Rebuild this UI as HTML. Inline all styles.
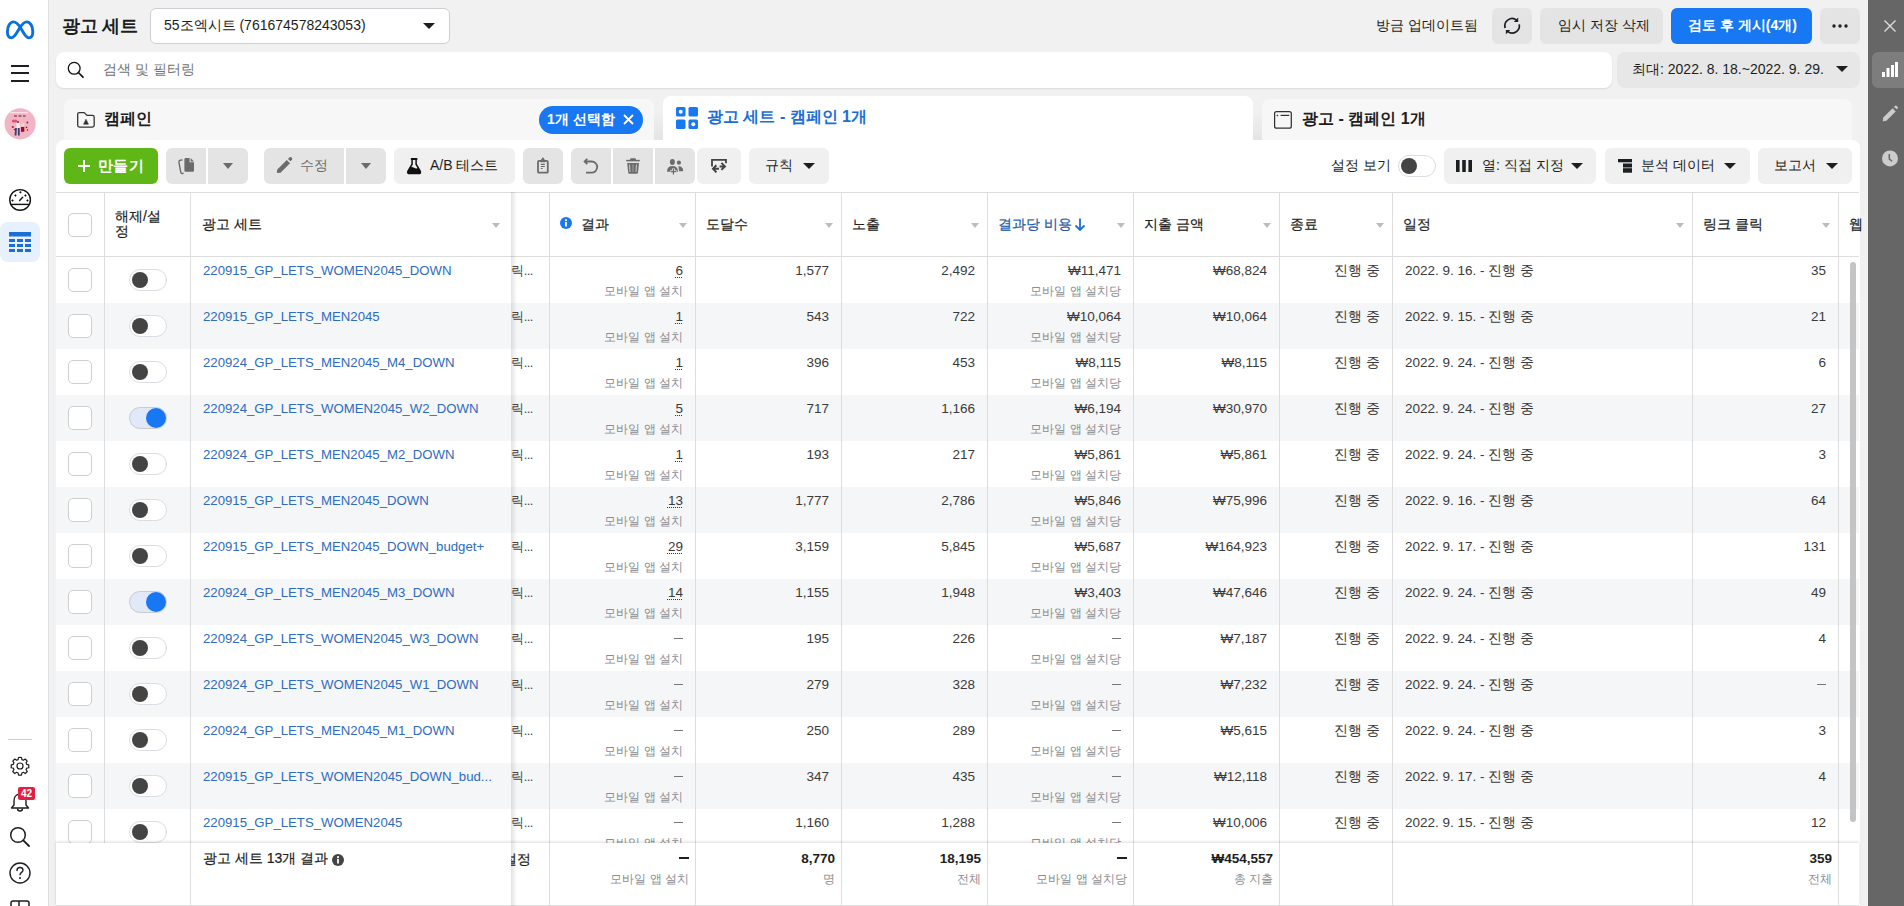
<!DOCTYPE html><html><head><meta charset="utf-8"><style>
*{box-sizing:border-box;margin:0;padding:0}
html,body{width:1904px;height:906px;overflow:hidden;background:#f1f1f1}
body{position:relative;font-family:"Liberation Sans",sans-serif;color:#1c1e21;font-size:14px}
.a{position:absolute}
.t{position:absolute;white-space:nowrap;line-height:1}
.r{text-align:right}
.btn{position:absolute;background:#ebebeb;border-radius:6px}
svg{position:absolute;display:block;overflow:visible}
.num{font-size:13.5px;color:#3a3a3a}
.dash{display:inline-block;width:9px;height:1.5px;background:#777;vertical-align:4px}
.dashb{display:inline-block;width:10px;height:2px;background:#1c1e21;vertical-align:4px}
.ul{text-decoration:underline dotted #333;text-decoration-thickness:1.3px;text-underline-offset:1.5px}
.sub{font-size:12px;color:#8a8d91}
.hd{font-size:14px;color:#1c1e21;-webkit-text-stroke:0.2px #1c1e21}
.cb{position:absolute;width:24px;height:24px;border:1px solid #cfcfcf;border-radius:5px;background:#fff}
.tg{position:absolute;width:38px;height:22px;border-radius:11px;border:1px solid #dadde1;background:#fff}
.tg i{position:absolute;left:2px;top:2px;width:16px;height:16px;border-radius:50%;background:#444}
.tg.on{background:#e1e8f7;border-color:#c9ccd1}
.tg.on i{left:16px;top:-0.5px;width:20px;height:20px;background:#1877f2}
.dd{position:absolute;width:0;height:0;border-left:6px solid transparent;border-right:6px solid transparent;border-top:6px solid #1c1e21}
.ddg{position:absolute;width:0;height:0;border-left:6px solid transparent;border-right:6px solid transparent;border-top:6px solid #bdbdbd}
</style></head><body>
<div class="a" style="left:0;top:0;width:49px;height:906px;background:#fff;border-right:1px solid #dddfe2"></div>
<div class="a" style="left:1868px;top:0;width:36px;height:906px;background:#666"></div>
<svg style="left:0px;top:0px" width="48" height="48" viewBox="0 0 48 48"><path d="M19.6 28 C17 32.2 14.8 37.9 11.2 37.9 C8.6 37.9 7.4 35.2 7.4 31.6 C7.4 26.3 10 21.9 13.5 21.9 C16.4 21.9 18.4 24.6 20.4 27.5 C23 31.6 25.6 37.9 29 37.9 C31.5 37.9 32.8 35.4 32.8 31.6 C32.8 26 30.1 21.9 26.6 21.9 C23.6 21.9 21.6 25 19.6 28 Z" fill="none" stroke="#0a6fe0" stroke-width="2.9" stroke-linejoin="round"/></svg>
<div class="a" style="left:11px;top:65px;width:18px;height:2px;background:#1c1e21"></div>
<div class="a" style="left:11px;top:72px;width:18px;height:2px;background:#1c1e21"></div>
<div class="a" style="left:11px;top:80px;width:18px;height:2px;background:#1c1e21"></div>
<svg style="left:0px;top:104px" width="40" height="40" viewBox="0 0 40 40"><circle cx="20.1" cy="19.8" r="15.6" fill="#f2b5c5"/><rect x="10" y="8" width="18" height="1.2" fill="#fff" opacity=".6"/><path d="M14 12 h3 M18.5 12 h3 M23 12 h2.5" stroke="#8a2c3a" stroke-width="1.3" opacity=".8"/><circle cx="13.5" cy="17" r="1.6" fill="#e0506a"/><circle cx="15.6" cy="17" r="1.6" fill="#e0506a"/><rect x="16.5" y="19" width="3.2" height="5" fill="#fbeef0"/><path d="M16 24 L15.5 31.5 M18.8 24 L18.8 31.5" stroke="#3c3f73" stroke-width="1.8"/><circle cx="22.8" cy="20.8" r="1.7" fill="#f1d9b0"/><rect x="21" y="23" width="3.3" height="4.8" fill="#9b0f1c"/><circle cx="27.4" cy="18.5" r=".9" fill="#8a2030"/><circle cx="12.8" cy="23" r="1" fill="#8a2030"/><circle cx="26.5" cy="23.4" r=".8" fill="#8a2030"/><circle cx="27.5" cy="26" r=".8" fill="#8a2030"/><circle cx="14.4" cy="25.5" r=".7" fill="#8a2030"/><circle cx="18" cy="18" r=".9" fill="#8a2030"/></svg>
<svg style="left:9px;top:189px" width="22" height="22" viewBox="0 0 22 22"><circle cx="11.1" cy="10.9" r="10.3" fill="none" stroke="#111" stroke-width="1.4"/><line x1="1.2" y1="15.4" x2="21" y2="15.4" stroke="#111" stroke-width="1.4"/><line x1="10.6" y1="11.5" x2="13.7" y2="8.3" stroke="#111" stroke-width="1.4" stroke-linecap="round"/><rect x="10.5" y="2.4" width="1.8" height="1.8" transform="rotate(45 11.4 3.3)" fill="#111"/><rect x="5.5" y="5.5" width="1.8" height="1.8" transform="rotate(45 6.4 6.4)" fill="#111"/><rect x="15.499999999999998" y="5.5" width="1.8" height="1.8" transform="rotate(45 16.4 6.4)" fill="#111"/><rect x="2.6" y="10.5" width="1.8" height="1.8" transform="rotate(45 3.5 11.4)" fill="#111"/><rect x="17.6" y="10.5" width="1.8" height="1.8" transform="rotate(45 18.5 11.4)" fill="#111"/></svg>
<div class="a" style="left:0;top:222px;width:40px;height:40px;border-radius:8px;background:#e7f0fd"></div>
<svg style="left:9px;top:232px" width="22" height="20" viewBox="0 0 22 20"><rect x="0" y="0" width="22" height="4.5" fill="#1a6ed8"/><rect x="0" y="7" width="6" height="3" fill="#1a6ed8"/><rect x="8" y="7" width="6" height="3" fill="#1a6ed8"/><rect x="16" y="7" width="6" height="3" fill="#1a6ed8"/><rect x="0" y="12" width="6" height="3" fill="#1a6ed8"/><rect x="8" y="12" width="6" height="3" fill="#1a6ed8"/><rect x="16" y="12" width="6" height="3" fill="#1a6ed8"/><rect x="0" y="17" width="6" height="3" fill="#1a6ed8"/><rect x="8" y="17" width="6" height="3" fill="#1a6ed8"/><rect x="16" y="17" width="6" height="3" fill="#1a6ed8"/></svg>
<div class="a" style="left:8px;top:739px;width:24px;height:1px;background:#ccd0d5"></div>
<svg style="left:9px;top:755px" width="22" height="22" viewBox="0 0 24 24"><path d="M12 2.5l1.6 .2.5 2.3 1.6.7 2-1.3 2.2 2.2-1.3 2 .7 1.6 2.3.5v3.2l-2.3.5-.7 1.6 1.3 2-2.2 2.2-2-1.3-1.6.7-.5 2.3h-3.2l-.5-2.3-1.6-.7-2 1.3-2.2-2.2 1.3-2-.7-1.6-2.3-.5v-3.2l2.3-.5.7-1.6-1.3-2 2.2-2.2 2 1.3 1.6-.7.5-2.3z" fill="none" stroke="#1c1e21" stroke-width="1.3" stroke-linejoin="round"/><circle cx="12" cy="12" r="3.3" fill="none" stroke="#1c1e21" stroke-width="1.3"/></svg>
<svg style="left:9px;top:790px" width="22" height="24" viewBox="0 0 22 24"><path d="M11 4 C6.5 4 5 8 5 11 V15 L2.5 18 H19.5 L17 15 V11 C17 8 15.5 4 11 4 Z" fill="none" stroke="#1c1e21" stroke-width="1.4" stroke-linejoin="round"/><path d="M8.5 18.5 a2.5 2.5 0 0 0 5 0" fill="none" stroke="#1c1e21" stroke-width="1.4"/></svg>
<div class="a" style="left:18px;top:787px;width:17px;height:13px;border-radius:2px;background:#e41e3f;color:#fff;font-size:10px;font-weight:bold;line-height:13px;text-align:center">42</div>
<svg style="left:9px;top:826px" width="22" height="22" viewBox="0 0 22 22"><circle cx="9" cy="9" r="7.3" fill="none" stroke="#1c1e21" stroke-width="1.5"/><line x1="14.3" y1="14.3" x2="20" y2="20" stroke="#1c1e21" stroke-width="1.8" stroke-linecap="round"/></svg>
<svg style="left:9px;top:862px" width="22" height="22" viewBox="0 0 22 22"><circle cx="11" cy="11" r="10" fill="none" stroke="#1c1e21" stroke-width="1.4"/><path d="M8 8.5 C8 6.5 9.5 5.5 11 5.5 C12.8 5.5 14 6.7 14 8.2 C14 10.3 11 10.5 11 12.8" fill="none" stroke="#1c1e21" stroke-width="1.4" stroke-linecap="round"/><circle cx="11" cy="16" r="1" fill="#1c1e21"/></svg>
<svg style="left:10px;top:900px" width="20" height="10" viewBox="0 0 20 10"><rect x="1" y="1" width="18" height="14" rx="2" fill="none" stroke="#1c1e21" stroke-width="1.5"/><line x1="9" y1="1" x2="9" y2="10" stroke="#1c1e21" stroke-width="1.5"/></svg>
<div class="t " style="left:62px;top:17px;font-size:18px;font-weight:bold;color:#1c1e21;letter-spacing:-0.2px">광고 세트</div>
<div class="a" style="left:150px;top:8px;width:300px;height:36px;background:#fff;border:1px solid #ccd0d5;border-radius:6px"></div>
<div class="t " style="left:164px;top:18px;font-size:14px;color:#1c1e21">55조엑시트 (761674578243053)</div>
<div class="dd" style="left:423px;top:23px"></div>
<div class="t " style="left:1376px;top:18px;font-size:14px;color:#1c1e21">방금 업데이트됨</div>
<div class="btn" style="left:1492px;top:8px;width:40px;height:36px;background:#e4e4e4"></div>
<svg style="left:1500px;top:14px" width="24" height="24" viewBox="1500 14 24 24"><path d="M1505.2 27.9 A7.2 7.2 0 0 1 1516.6 20.2" fill="none" stroke="#1c1e21" stroke-width="1.7"/><path d="M1519.2 24.4 A7.2 7.2 0 0 1 1507.6 31.4" fill="none" stroke="#1c1e21" stroke-width="1.7"/><path d="M1518.2 17.6 V22 H1513.8 Z" fill="#1c1e21"/><path d="M1505.9 34.2 V29.9 H1510.3 Z" fill="#1c1e21"/></svg>
<div class="btn" style="left:1540px;top:8px;width:123px;height:36px;background:#e4e4e4"></div>
<div class="t " style="left:1558px;top:18px;font-size:14px;color:#1c1e21">임시 저장 삭제</div>
<div class="btn" style="left:1671px;top:8px;width:141px;height:36px;background:#1877f2"></div>
<div class="t " style="left:1688px;top:18px;font-size:14px;color:#fff;font-weight:bold">검토 후 게시(4개)</div>
<div class="btn" style="left:1820px;top:8px;width:40px;height:36px;background:#e4e4e4"></div>
<svg style="left:1831px;top:24px" width="18" height="4" viewBox="0 0 18 4"><circle cx="3" cy="2" r="1.7" fill="#1c1e21"/><circle cx="9" cy="2" r="1.7" fill="#1c1e21"/><circle cx="15" cy="2" r="1.7" fill="#1c1e21"/></svg>
<div class="a" style="left:56px;top:52px;width:1556px;height:36px;background:#fff;border-radius:8px;box-shadow:0 1px 2px rgba(0,0,0,.10)"></div>
<svg style="left:64px;top:58px" width="24" height="24" viewBox="64 58 24 24"><circle cx="74.2" cy="68.3" r="5.9" fill="none" stroke="#111" stroke-width="1.3"/><line x1="78.4" y1="72.5" x2="83" y2="77.1" stroke="#111" stroke-width="1.7" stroke-linecap="round"/></svg>
<div class="t " style="left:103px;top:62px;font-size:14px;color:#737373">검색 및 필터링</div>
<div class="btn" style="left:1617px;top:52px;width:243px;height:36px;background:#e7e7e7;border-radius:8px"></div>
<div class="t " style="left:1632px;top:62px;font-size:14px;color:#1c1e21">최대: 2022. 8. 18.~2022. 9. 29.</div>
<div class="dd" style="left:1836px;top:66px"></div>
<div class="a" style="left:64px;top:99px;width:590px;height:45px;background:#f7f7f7;border-radius:8px 8px 0 0"></div>
<svg style="left:74px;top:108px" width="24" height="24" viewBox="74 108 24 24"><path d="M79.2 112.6 H83.8 Q84.6 112.6 85.1 113.3 L86.2 114.6 Q86.7 115.3 87.5 115.3 H92.4 Q94.2 115.3 94.2 117.1 V125.3 Q94.2 127.1 92.4 127.1 H79.5 Q77.7 127.1 77.7 125.3 V114.1 Q77.7 112.6 79.2 112.6 Z" fill="none" stroke="#333" stroke-width="1.3"/><path d="M83.6 124.2 L86 119.2 L88.4 124.2 Z" fill="#333" stroke="#333" stroke-width=".6" stroke-linejoin="round"/></svg>
<div class="t " style="left:104px;top:111px;font-size:16px;font-weight:bold;color:#1c1e21">캠페인</div>
<div class="a" style="left:539px;top:106px;width:104px;height:28px;border-radius:14px;background:#1877f2"></div>
<div class="t " style="left:547px;top:112px;font-size:14px;color:#fff;font-weight:bold">1개 선택함</div>
<svg style="left:623px;top:114px" width="11" height="11" viewBox="0 0 11 11"><path d="M1 1 L10 10 M10 1 L1 10" stroke="#fff" stroke-width="1.8"/></svg>
<div class="a" style="left:654px;top:110px;width:9px;height:34px;background:linear-gradient(180deg,rgba(0,0,0,0),rgba(0,0,0,.06))"></div>
<div class="a" style="left:1253px;top:110px;width:9px;height:34px;background:linear-gradient(180deg,rgba(0,0,0,0),rgba(0,0,0,.06))"></div>
<div class="a" style="left:663px;top:96px;width:590px;height:48px;background:#fff;border-radius:8px 8px 0 0"></div>
<svg style="left:676px;top:107px" width="22" height="22" viewBox="0 0 22 22"><rect x="0" y="0" width="9.5" height="9.5" rx="1.5" fill="#1877f2"/><rect x="12.5" y="0" width="9.5" height="9.5" rx="1.5" fill="#1877f2"/><rect x="0" y="12.5" width="9.5" height="9.5" rx="1.5" fill="#1877f2"/><rect x="12.5" y="12.5" width="9.5" height="9.5" rx="1.5" fill="#1877f2"/><circle cx="4.7" cy="4.7" r="2" fill="#fff"/><circle cx="17.3" cy="17.3" r="2" fill="#fff"/></svg>
<div class="t " style="left:707px;top:109px;font-size:16px;font-weight:bold;color:#1a6ed8">광고 세트 - 캠페인 1개</div>
<div class="a" style="left:1262px;top:99px;width:590px;height:45px;background:#f7f7f7;border-radius:8px 8px 0 0"></div>
<svg style="left:1270px;top:108px" width="26" height="24" viewBox="1270 108 26 24"><rect x="1274.6" y="111.6" width="16.7" height="16.6" rx="2" fill="none" stroke="#333" stroke-width="1.25"/><path d="M1280.6 115.4 H1289.2" stroke="#333" stroke-width="1.2"/><rect x="1276.7" y="114.7" width="1.4" height="1.4" transform="rotate(45 1277.4 115.4)" fill="#333"/></svg>
<div class="t " style="left:1302px;top:111px;font-size:16px;font-weight:bold;color:#1c1e21">광고 - 캠페인 1개</div>
<div class="a" style="left:56px;top:140px;width:1804px;height:766px;background:#fff;border-radius:8px 8px 0 0"></div>
<div class="btn" style="left:64px;top:148px;width:94px;height:36px;background:#5fb617"></div>
<svg style="left:77px;top:159px" width="14" height="14" viewBox="0 0 14 14"><path d="M7 1 V13 M1 7 H13" stroke="#fff" stroke-width="2"/></svg>
<div class="t " style="left:98px;top:158px;font-size:15px;color:#fff;font-weight:bold;letter-spacing:0.3px">만들기</div>
<div class="btn" style="left:166px;top:148px;width:40px;height:36px;background:#e4e4e4;border-radius:6px 0 0 6px"></div>
<div class="btn" style="left:208px;top:148px;width:40px;height:36px;background:#e4e4e4;border-radius:0 6px 6px 0"></div>
<svg style="left:174px;top:154px" width="24" height="24" viewBox="174 154 24 24"><path d="M185.6 158 H189.6 V162.2 H194 V170.6 Q194 171.8 192.8 171.8 H185.6 Q184.4 171.8 184.4 170.6 V159.2 Q184.4 158 185.6 158 Z" fill="#6b6b6b"/><path d="M190.6 158 L194 161.4 H190.6 Z" fill="#6b6b6b"/><path d="M182.5 159.9 L180.2 160.3 Q178.6 160.6 178.9 162.2 L180.8 172.4 Q181.1 173.8 182.6 173.5 L183.6 173.3" fill="none" stroke="#6b6b6b" stroke-width="1.4"/></svg>
<div class="a" style="left:223px;top:163px;width:0;height:0;border-left:5px solid transparent;border-right:5px solid transparent;border-top:6px solid #6b6b6b"></div>
<div class="btn" style="left:264px;top:148px;width:80px;height:36px;background:#e4e4e4;border-radius:6px 0 0 6px"></div>
<div class="btn" style="left:346px;top:148px;width:40px;height:36px;background:#e4e4e4;border-radius:0 6px 6px 0"></div>
<svg style="left:274px;top:154px" width="22" height="22" viewBox="274 154 22 22"><path d="M277.3 169.6 L286.8 160.1 L290 163.3 L280.5 172.8 L277.8 173 Q276.8 173 276.9 172 Z" fill="#6b6b6b"/><path d="M288 158.9 L289.6 157.3 Q290.4 156.6 291.2 157.3 L292 158.1 Q292.7 158.9 292 159.7 L290.4 161.3 Z" fill="#6b6b6b"/></svg>
<div class="t " style="left:300px;top:158px;font-size:14px;color:#6b6b6b">수정</div>
<div class="a" style="left:361px;top:163px;width:0;height:0;border-left:5px solid transparent;border-right:5px solid transparent;border-top:6px solid #6b6b6b"></div>
<div class="btn" style="left:394px;top:148px;width:121px;height:36px;background:#f0f0f0"></div>
<svg style="left:404px;top:154px" width="20" height="22" viewBox="404 154 20 22"><rect x="410.8" y="157.9" width="6.6" height="2" rx=".4" fill="#111"/><path d="M412.1 159.5 V164.2 L408 171 Q406.9 173.6 409.8 173.6 H418.4 Q421.3 173.6 420.2 171 L416.1 164.2 V159.5" fill="none" stroke="#111" stroke-width="1.5"/><path d="M409.8 167.6 Q412 166.3 414.1 167.8 Q416.3 169.3 418.4 167.6 L420.2 171 Q421.3 173.6 418.4 173.6 H409.8 Q406.9 173.6 408 171 Z" fill="#111"/></svg>
<div class="t " style="left:430px;top:158px;font-size:14px;color:#1c1e21">A/B 테스트</div>
<div class="btn" style="left:523px;top:148px;width:40px;height:36px;background:#e4e4e4"></div>
<svg style="left:533px;top:154px" width="20" height="22" viewBox="533 154 20 22"><rect x="538" y="160.9" width="9.8" height="11.8" rx="1" fill="none" stroke="#6b6b6b" stroke-width="1.8"/><path d="M540.6 161.6 L542.9 158 L545.2 161.6 Z" fill="#6b6b6b" stroke="#6b6b6b" stroke-width="1.2" stroke-linejoin="round"/><path d="M540.8 164.4 H544.8 M540.8 166.5 H544.8 M540.8 168.5 H542.6" stroke="#6b6b6b" stroke-width="1.1"/></svg>
<div class="btn" style="left:571px;top:148px;width:40px;height:36px;background:#e4e4e4;border-radius:6px 0 0 6px"></div>
<div class="btn" style="left:613px;top:148px;width:40px;height:36px;background:#e4e4e4;border-radius:0"></div>
<div class="btn" style="left:655px;top:148px;width:40px;height:36px;background:#e4e4e4;border-radius:0 6px 6px 0"></div>
<svg style="left:580px;top:154px" width="22" height="22" viewBox="580 154 22 22"><path d="M587.3 158.8 L584.6 161.5 L587.3 164.2" fill="none" stroke="#6b6b6b" stroke-width="1.8" stroke-linejoin="miter"/><path d="M585 161.5 H591.6 A5.6 5.6 0 0 1 591.6 172.7 H586" fill="none" stroke="#6b6b6b" stroke-width="1.8"/></svg>
<svg style="left:622px;top:154px" width="22" height="22" viewBox="622 154 22 22"><path d="M626.2 160.6 H639.8" stroke="#6b6b6b" stroke-width="1.5"/><path d="M629.6 160.4 L630.6 158.2 H635.4 L636.4 160.4 Z" fill="#6b6b6b"/><path d="M627.2 163 H639 L638 172.6 Q637.9 173.8 636.7 173.8 H629.5 Q628.3 173.8 628.2 172.6 Z" fill="#6b6b6b"/><path d="M629.5 164.5 L630 172 M636.5 164.5 L636 172" stroke="#d8d8d8" stroke-width=".9"/><path d="M633 164.5 V172" stroke="#9a9a9a" stroke-width="1.2"/></svg>
<svg style="left:664px;top:154px" width="22" height="22" viewBox="664 154 22 22"><ellipse cx="672.4" cy="162" rx="2.5" ry="2.9" fill="#6b6b6b"/><circle cx="678.9" cy="162.7" r="2.1" fill="#6b6b6b"/><path d="M667 171.7 Q667 166 672.5 166 Q678 166 678 171.7 Z" fill="#6b6b6b"/><path d="M678.3 166.2 Q683.2 166.4 683.2 170.5 Q683.2 171.3 682.4 171.3 H679.2 Z" fill="#6b6b6b"/><path d="M673.4 168.6 V175 M670.2 171.7 H676.6" stroke="#e4e4e4" stroke-width="3"/><path d="M673.4 169 V174.5 M670.7 171.7 H676.1" stroke="#6b6b6b" stroke-width="1.2"/></svg>
<div class="btn" style="left:697px;top:148px;width:44px;height:36px;background:#f0f0f0"></div>
<svg style="left:706px;top:154px" width="26" height="22" viewBox="706 154 26 22"><path d="M712 166.5 V159.8 H726 V163.3" fill="none" stroke="#444" stroke-width="1.8"/><path d="M716.4 165.2 L713 168.8 L716.4 172.4 M713.4 168.8 H719" fill="none" stroke="#444" stroke-width="2"/><path d="M721.4 162.9 L724.9 166.4 L721.4 169.9 M724.4 166.4 H719.6" fill="none" stroke="#444" stroke-width="2"/></svg>
<div class="btn" style="left:749px;top:148px;width:80px;height:36px;background:#f0f0f0"></div>
<div class="t " style="left:765px;top:158px;font-size:14px;color:#1c1e21">규칙</div>
<div class="dd" style="left:803px;top:163px"></div>
<div class="t " style="left:1331px;top:158px;font-size:14px;color:#1c1e21">설정 보기</div>
<div class="tg" style="left:1398px;top:155px"><i></i></div>
<div class="btn" style="left:1444px;top:148px;width:152px;height:36px;background:#f0f0f0"></div>
<svg style="left:1456px;top:160px" width="16" height="12" viewBox="0 0 16 12"><rect x="0" y="0" width="3.6" height="12" fill="#1c1e21"/><rect x="6.2" y="0" width="3.6" height="12" fill="#1c1e21"/><rect x="12.4" y="0" width="3.6" height="12" fill="#1c1e21"/></svg>
<div class="t " style="left:1482px;top:158px;font-size:14px;color:#1c1e21">열: 직접 지정</div>
<div class="dd" style="left:1571px;top:163px"></div>
<div class="btn" style="left:1605px;top:148px;width:145px;height:36px;background:#f0f0f0"></div>
<svg style="left:1618px;top:159px" width="14" height="14" viewBox="0 0 14 14"><rect x="0" y="0" width="14" height="3.3" fill="#1c1e21"/><rect x="5" y="4.5" width="9" height="4" fill="#1c1e21"/><rect x="5" y="9.2" width="9" height="4.5" fill="#1c1e21"/></svg>
<div class="t " style="left:1641px;top:158px;font-size:14px;color:#1c1e21">분석 데이터</div>
<div class="dd" style="left:1724px;top:163px"></div>
<div class="btn" style="left:1758px;top:148px;width:94px;height:36px;background:#f0f0f0"></div>
<div class="t " style="left:1774px;top:158px;font-size:14px;color:#1c1e21">보고서</div>
<div class="dd" style="left:1826px;top:163px"></div>
<svg style="left:1884px;top:20px" width="12" height="12" viewBox="0 0 12 12"><path d="M0.5 0.5 L11.5 11.5 M11.5 0.5 L0.5 11.5" stroke="#ddd" stroke-width="1.4"/></svg>
<div class="a" style="left:1872px;top:52px;width:32px;height:36px;background:#7d7d7d;border-radius:6px 0 0 6px"></div>
<svg style="left:1882px;top:62px" width="16" height="15" viewBox="0 0 16 15"><rect x="0" y="10" width="3" height="5" fill="#fff"/><rect x="4.5" y="6" width="3" height="9" fill="#fff"/><rect x="9" y="3" width="3" height="12" fill="#fff"/><rect x="13" y="0" width="3" height="15" fill="#fff"/></svg>
<svg style="left:1880px;top:104px" width="20" height="20" viewBox="1880 104 20 20"><path d="M1883.3 117.6 L1892.6 108.3 L1895.7 111.4 L1886.4 120.7 L1883.6 121.2 Q1882.7 121.3 1882.8 120.4 Z" fill="#ccc"/><path d="M1893.8 107.1 L1895 105.9 Q1895.9 105.1 1896.8 105.9 L1897.6 106.7 Q1898.4 107.6 1897.6 108.5 L1896.9 109.2 Z" fill="#ccc"/></svg>
<svg style="left:1882px;top:150px" width="16" height="17" viewBox="0 0 16 17"><circle cx="8" cy="8.4" r="8" fill="#ccc"/><path d="M7.3 4 V9 L10 11.2" fill="none" stroke="#666" stroke-width="1.5"/></svg>
<div class="a" style="left:56px;top:192px;width:1803px;height:1px;background:#dddddd"></div>
<div class="a" style="left:56px;top:256px;width:1803px;height:1px;background:#dddddd"></div>
<div class="a" style="left:56px;top:257px;width:1803px;height:46px;background:#fff"></div>
<div class="a" style="left:56px;top:303px;width:1803px;height:46px;background:#f5f6f7"></div>
<div class="a" style="left:56px;top:349px;width:1803px;height:46px;background:#fff"></div>
<div class="a" style="left:56px;top:395px;width:1803px;height:46px;background:#f5f6f7"></div>
<div class="a" style="left:56px;top:441px;width:1803px;height:46px;background:#fff"></div>
<div class="a" style="left:56px;top:487px;width:1803px;height:46px;background:#f5f6f7"></div>
<div class="a" style="left:56px;top:533px;width:1803px;height:46px;background:#fff"></div>
<div class="a" style="left:56px;top:579px;width:1803px;height:46px;background:#f5f6f7"></div>
<div class="a" style="left:56px;top:625px;width:1803px;height:46px;background:#fff"></div>
<div class="a" style="left:56px;top:671px;width:1803px;height:46px;background:#f5f6f7"></div>
<div class="a" style="left:56px;top:717px;width:1803px;height:46px;background:#fff"></div>
<div class="a" style="left:56px;top:763px;width:1803px;height:46px;background:#f5f6f7"></div>
<div class="a" style="left:56px;top:809px;width:1803px;height:34px;background:#fff"></div>
<div class="a" style="left:104px;top:192px;width:1px;height:714px;background:#dddddd"></div>
<div class="a" style="left:190px;top:192px;width:1px;height:714px;background:#dddddd"></div>
<div class="a" style="left:549px;top:192px;width:1px;height:714px;background:#dddddd"></div>
<div class="a" style="left:695px;top:192px;width:1px;height:714px;background:#dddddd"></div>
<div class="a" style="left:841px;top:192px;width:1px;height:714px;background:#dddddd"></div>
<div class="a" style="left:987px;top:192px;width:1px;height:714px;background:#dddddd"></div>
<div class="a" style="left:1133px;top:192px;width:1px;height:714px;background:#dddddd"></div>
<div class="a" style="left:1279px;top:192px;width:1px;height:714px;background:#dddddd"></div>
<div class="a" style="left:1392px;top:192px;width:1px;height:714px;background:#dddddd"></div>
<div class="a" style="left:1692px;top:192px;width:1px;height:714px;background:#dddddd"></div>
<div class="a" style="left:1838px;top:192px;width:1px;height:714px;background:#dddddd"></div>
<div class="a" style="left:511px;top:192px;width:6px;height:714px;background:linear-gradient(90deg,rgba(0,0,0,.11),rgba(0,0,0,0))"></div>
<div class="cb" style="left:68px;top:213px"></div>
<div class="t hd" style="left:115px;top:209px;line-height:15px">해제/설<br>정</div>
<div class="t hd" style="left:202px;top:217px;">광고 세트</div>
<div class="ddg" style="left:492px;top:223px;border-left-width:4.5px;border-right-width:4.5px;border-top-width:5px"></div>
<svg style="left:560px;top:217px" width="12" height="12" viewBox="0 0 12 12"><circle cx="6" cy="6" r="6" fill="#1877f2"/><rect x="5.1" y="5" width="1.8" height="4.5" fill="#fff"/><circle cx="6" cy="3.2" r="1.1" fill="#fff"/></svg>
<div class="t hd" style="left:581px;top:217px;color:#1c1e21">결과</div>
<div class="ddg" style="left:679px;top:223px;border-left-width:4.5px;border-right-width:4.5px;border-top-width:5px"></div>
<div class="t hd" style="left:706px;top:217px;color:#1c1e21">도달수</div>
<div class="ddg" style="left:825px;top:223px;border-left-width:4.5px;border-right-width:4.5px;border-top-width:5px"></div>
<div class="t hd" style="left:852px;top:217px;color:#1c1e21">노출</div>
<div class="ddg" style="left:971px;top:223px;border-left-width:4.5px;border-right-width:4.5px;border-top-width:5px"></div>
<div class="t hd" style="left:998px;top:217px;color:#1a6ed8">결과당 비용</div>
<div class="ddg" style="left:1117px;top:223px;border-left-width:4.5px;border-right-width:4.5px;border-top-width:5px"></div>
<svg style="left:1074px;top:218px" width="12" height="13" viewBox="0 0 12 13"><path d="M6 0.5 V12 M1.5 7.5 L6 12 L10.5 7.5" fill="none" stroke="#1a6ed8" stroke-width="1.8"/></svg>
<div class="t hd" style="left:1144px;top:217px;color:#1c1e21">지출 금액</div>
<div class="ddg" style="left:1263px;top:223px;border-left-width:4.5px;border-right-width:4.5px;border-top-width:5px"></div>
<div class="t hd" style="left:1290px;top:217px;color:#1c1e21">종료</div>
<div class="ddg" style="left:1376px;top:223px;border-left-width:4.5px;border-right-width:4.5px;border-top-width:5px"></div>
<div class="t hd" style="left:1403px;top:217px;color:#1c1e21">일정</div>
<div class="ddg" style="left:1676px;top:223px;border-left-width:4.5px;border-right-width:4.5px;border-top-width:5px"></div>
<div class="t hd" style="left:1703px;top:217px;color:#1c1e21">링크 클릭</div>
<div class="ddg" style="left:1822px;top:223px;border-left-width:4.5px;border-right-width:4.5px;border-top-width:5px"></div>
<div class="t hd" style="left:1849px;top:217px;">웹</div>
<div class="cb" style="left:68px;top:268px"></div>
<div class="tg" style="left:129px;top:269px"><i></i></div>
<div class="t " style="left:203px;top:264px;font-size:13.2px;color:#2d6cc0">220915_GP_LETS_WOMEN2045_DOWN</div>
<div class="a" style="left:511px;top:257px;width:38px;height:46px;overflow:hidden"><div class="t" style="left:-12px;top:7px;font-size:13px;color:#444;letter-spacing:-0.6px">클릭...</div></div>
<div class="t num" style="right:1221px;top:264px;"><span class="ul">6</span></div>
<div class="t sub" style="right:1221px;top:285px;">모바일 앱 설치</div>
<div class="t num" style="right:1075px;top:264px;">1,577</div>
<div class="t num" style="right:929px;top:264px;">2,492</div>
<div class="t num" style="right:783px;top:264px;">₩11,471</div>
<div class="t sub" style="right:783px;top:285px;">모바일 앱 설치당</div>
<div class="t num" style="right:637px;top:264px;">₩68,824</div>
<div class="t num" style="right:524px;top:264px;">진행 중</div>
<div class="t num" style="left:1405px;top:264px;">2022. 9. 16. - 진행 중</div>
<div class="t num" style="right:78px;top:264px;">35</div>
<div class="cb" style="left:68px;top:314px"></div>
<div class="tg" style="left:129px;top:315px"><i></i></div>
<div class="t " style="left:203px;top:310px;font-size:13.2px;color:#2d6cc0">220915_GP_LETS_MEN2045</div>
<div class="a" style="left:511px;top:303px;width:38px;height:46px;overflow:hidden"><div class="t" style="left:-12px;top:7px;font-size:13px;color:#444;letter-spacing:-0.6px">클릭...</div></div>
<div class="t num" style="right:1221px;top:310px;"><span class="ul">1</span></div>
<div class="t sub" style="right:1221px;top:331px;">모바일 앱 설치</div>
<div class="t num" style="right:1075px;top:310px;">543</div>
<div class="t num" style="right:929px;top:310px;">722</div>
<div class="t num" style="right:783px;top:310px;">₩10,064</div>
<div class="t sub" style="right:783px;top:331px;">모바일 앱 설치당</div>
<div class="t num" style="right:637px;top:310px;">₩10,064</div>
<div class="t num" style="right:524px;top:310px;">진행 중</div>
<div class="t num" style="left:1405px;top:310px;">2022. 9. 15. - 진행 중</div>
<div class="t num" style="right:78px;top:310px;">21</div>
<div class="cb" style="left:68px;top:360px"></div>
<div class="tg" style="left:129px;top:361px"><i></i></div>
<div class="t " style="left:203px;top:356px;font-size:13.2px;color:#2d6cc0">220924_GP_LETS_MEN2045_M4_DOWN</div>
<div class="a" style="left:511px;top:349px;width:38px;height:46px;overflow:hidden"><div class="t" style="left:-12px;top:7px;font-size:13px;color:#444;letter-spacing:-0.6px">클릭...</div></div>
<div class="t num" style="right:1221px;top:356px;"><span class="ul">1</span></div>
<div class="t sub" style="right:1221px;top:377px;">모바일 앱 설치</div>
<div class="t num" style="right:1075px;top:356px;">396</div>
<div class="t num" style="right:929px;top:356px;">453</div>
<div class="t num" style="right:783px;top:356px;">₩8,115</div>
<div class="t sub" style="right:783px;top:377px;">모바일 앱 설치당</div>
<div class="t num" style="right:637px;top:356px;">₩8,115</div>
<div class="t num" style="right:524px;top:356px;">진행 중</div>
<div class="t num" style="left:1405px;top:356px;">2022. 9. 24. - 진행 중</div>
<div class="t num" style="right:78px;top:356px;">6</div>
<div class="cb" style="left:68px;top:406px"></div>
<div class="tg on" style="left:129px;top:407px"><i></i></div>
<div class="t " style="left:203px;top:402px;font-size:13.2px;color:#2d6cc0">220924_GP_LETS_WOMEN2045_W2_DOWN</div>
<div class="a" style="left:511px;top:395px;width:38px;height:46px;overflow:hidden"><div class="t" style="left:-12px;top:7px;font-size:13px;color:#444;letter-spacing:-0.6px">클릭...</div></div>
<div class="t num" style="right:1221px;top:402px;"><span class="ul">5</span></div>
<div class="t sub" style="right:1221px;top:423px;">모바일 앱 설치</div>
<div class="t num" style="right:1075px;top:402px;">717</div>
<div class="t num" style="right:929px;top:402px;">1,166</div>
<div class="t num" style="right:783px;top:402px;">₩6,194</div>
<div class="t sub" style="right:783px;top:423px;">모바일 앱 설치당</div>
<div class="t num" style="right:637px;top:402px;">₩30,970</div>
<div class="t num" style="right:524px;top:402px;">진행 중</div>
<div class="t num" style="left:1405px;top:402px;">2022. 9. 24. - 진행 중</div>
<div class="t num" style="right:78px;top:402px;">27</div>
<div class="cb" style="left:68px;top:452px"></div>
<div class="tg" style="left:129px;top:453px"><i></i></div>
<div class="t " style="left:203px;top:448px;font-size:13.2px;color:#2d6cc0">220924_GP_LETS_MEN2045_M2_DOWN</div>
<div class="a" style="left:511px;top:441px;width:38px;height:46px;overflow:hidden"><div class="t" style="left:-12px;top:7px;font-size:13px;color:#444;letter-spacing:-0.6px">클릭...</div></div>
<div class="t num" style="right:1221px;top:448px;"><span class="ul">1</span></div>
<div class="t sub" style="right:1221px;top:469px;">모바일 앱 설치</div>
<div class="t num" style="right:1075px;top:448px;">193</div>
<div class="t num" style="right:929px;top:448px;">217</div>
<div class="t num" style="right:783px;top:448px;">₩5,861</div>
<div class="t sub" style="right:783px;top:469px;">모바일 앱 설치당</div>
<div class="t num" style="right:637px;top:448px;">₩5,861</div>
<div class="t num" style="right:524px;top:448px;">진행 중</div>
<div class="t num" style="left:1405px;top:448px;">2022. 9. 24. - 진행 중</div>
<div class="t num" style="right:78px;top:448px;">3</div>
<div class="cb" style="left:68px;top:498px"></div>
<div class="tg" style="left:129px;top:499px"><i></i></div>
<div class="t " style="left:203px;top:494px;font-size:13.2px;color:#2d6cc0">220915_GP_LETS_MEN2045_DOWN</div>
<div class="a" style="left:511px;top:487px;width:38px;height:46px;overflow:hidden"><div class="t" style="left:-12px;top:7px;font-size:13px;color:#444;letter-spacing:-0.6px">클릭...</div></div>
<div class="t num" style="right:1221px;top:494px;"><span class="ul">13</span></div>
<div class="t sub" style="right:1221px;top:515px;">모바일 앱 설치</div>
<div class="t num" style="right:1075px;top:494px;">1,777</div>
<div class="t num" style="right:929px;top:494px;">2,786</div>
<div class="t num" style="right:783px;top:494px;">₩5,846</div>
<div class="t sub" style="right:783px;top:515px;">모바일 앱 설치당</div>
<div class="t num" style="right:637px;top:494px;">₩75,996</div>
<div class="t num" style="right:524px;top:494px;">진행 중</div>
<div class="t num" style="left:1405px;top:494px;">2022. 9. 16. - 진행 중</div>
<div class="t num" style="right:78px;top:494px;">64</div>
<div class="cb" style="left:68px;top:544px"></div>
<div class="tg" style="left:129px;top:545px"><i></i></div>
<div class="t " style="left:203px;top:540px;font-size:13.2px;color:#2d6cc0">220915_GP_LETS_MEN2045_DOWN_budget+</div>
<div class="a" style="left:511px;top:533px;width:38px;height:46px;overflow:hidden"><div class="t" style="left:-12px;top:7px;font-size:13px;color:#444;letter-spacing:-0.6px">클릭...</div></div>
<div class="t num" style="right:1221px;top:540px;"><span class="ul">29</span></div>
<div class="t sub" style="right:1221px;top:561px;">모바일 앱 설치</div>
<div class="t num" style="right:1075px;top:540px;">3,159</div>
<div class="t num" style="right:929px;top:540px;">5,845</div>
<div class="t num" style="right:783px;top:540px;">₩5,687</div>
<div class="t sub" style="right:783px;top:561px;">모바일 앱 설치당</div>
<div class="t num" style="right:637px;top:540px;">₩164,923</div>
<div class="t num" style="right:524px;top:540px;">진행 중</div>
<div class="t num" style="left:1405px;top:540px;">2022. 9. 17. - 진행 중</div>
<div class="t num" style="right:78px;top:540px;">131</div>
<div class="cb" style="left:68px;top:590px"></div>
<div class="tg on" style="left:129px;top:591px"><i></i></div>
<div class="t " style="left:203px;top:586px;font-size:13.2px;color:#2d6cc0">220924_GP_LETS_MEN2045_M3_DOWN</div>
<div class="a" style="left:511px;top:579px;width:38px;height:46px;overflow:hidden"><div class="t" style="left:-12px;top:7px;font-size:13px;color:#444;letter-spacing:-0.6px">클릭...</div></div>
<div class="t num" style="right:1221px;top:586px;"><span class="ul">14</span></div>
<div class="t sub" style="right:1221px;top:607px;">모바일 앱 설치</div>
<div class="t num" style="right:1075px;top:586px;">1,155</div>
<div class="t num" style="right:929px;top:586px;">1,948</div>
<div class="t num" style="right:783px;top:586px;">₩3,403</div>
<div class="t sub" style="right:783px;top:607px;">모바일 앱 설치당</div>
<div class="t num" style="right:637px;top:586px;">₩47,646</div>
<div class="t num" style="right:524px;top:586px;">진행 중</div>
<div class="t num" style="left:1405px;top:586px;">2022. 9. 24. - 진행 중</div>
<div class="t num" style="right:78px;top:586px;">49</div>
<div class="cb" style="left:68px;top:636px"></div>
<div class="tg" style="left:129px;top:637px"><i></i></div>
<div class="t " style="left:203px;top:632px;font-size:13.2px;color:#2d6cc0">220924_GP_LETS_WOMEN2045_W3_DOWN</div>
<div class="a" style="left:511px;top:625px;width:38px;height:46px;overflow:hidden"><div class="t" style="left:-12px;top:7px;font-size:13px;color:#444;letter-spacing:-0.6px">클릭...</div></div>
<div class="t num" style="right:1221px;top:632px;"><span class="dash"></span></div>
<div class="t sub" style="right:1221px;top:653px;">모바일 앱 설치</div>
<div class="t num" style="right:1075px;top:632px;">195</div>
<div class="t num" style="right:929px;top:632px;">226</div>
<div class="t num" style="right:783px;top:632px;"><span class="dash"></span></div>
<div class="t sub" style="right:783px;top:653px;">모바일 앱 설치당</div>
<div class="t num" style="right:637px;top:632px;">₩7,187</div>
<div class="t num" style="right:524px;top:632px;">진행 중</div>
<div class="t num" style="left:1405px;top:632px;">2022. 9. 24. - 진행 중</div>
<div class="t num" style="right:78px;top:632px;">4</div>
<div class="cb" style="left:68px;top:682px"></div>
<div class="tg" style="left:129px;top:683px"><i></i></div>
<div class="t " style="left:203px;top:678px;font-size:13.2px;color:#2d6cc0">220924_GP_LETS_WOMEN2045_W1_DOWN</div>
<div class="a" style="left:511px;top:671px;width:38px;height:46px;overflow:hidden"><div class="t" style="left:-12px;top:7px;font-size:13px;color:#444;letter-spacing:-0.6px">클릭...</div></div>
<div class="t num" style="right:1221px;top:678px;"><span class="dash"></span></div>
<div class="t sub" style="right:1221px;top:699px;">모바일 앱 설치</div>
<div class="t num" style="right:1075px;top:678px;">279</div>
<div class="t num" style="right:929px;top:678px;">328</div>
<div class="t num" style="right:783px;top:678px;"><span class="dash"></span></div>
<div class="t sub" style="right:783px;top:699px;">모바일 앱 설치당</div>
<div class="t num" style="right:637px;top:678px;">₩7,232</div>
<div class="t num" style="right:524px;top:678px;">진행 중</div>
<div class="t num" style="left:1405px;top:678px;">2022. 9. 24. - 진행 중</div>
<div class="t num" style="right:78px;top:678px;"><span class="dash"></span></div>
<div class="cb" style="left:68px;top:728px"></div>
<div class="tg" style="left:129px;top:729px"><i></i></div>
<div class="t " style="left:203px;top:724px;font-size:13.2px;color:#2d6cc0">220924_GP_LETS_MEN2045_M1_DOWN</div>
<div class="a" style="left:511px;top:717px;width:38px;height:46px;overflow:hidden"><div class="t" style="left:-12px;top:7px;font-size:13px;color:#444;letter-spacing:-0.6px">클릭...</div></div>
<div class="t num" style="right:1221px;top:724px;"><span class="dash"></span></div>
<div class="t sub" style="right:1221px;top:745px;">모바일 앱 설치</div>
<div class="t num" style="right:1075px;top:724px;">250</div>
<div class="t num" style="right:929px;top:724px;">289</div>
<div class="t num" style="right:783px;top:724px;"><span class="dash"></span></div>
<div class="t sub" style="right:783px;top:745px;">모바일 앱 설치당</div>
<div class="t num" style="right:637px;top:724px;">₩5,615</div>
<div class="t num" style="right:524px;top:724px;">진행 중</div>
<div class="t num" style="left:1405px;top:724px;">2022. 9. 24. - 진행 중</div>
<div class="t num" style="right:78px;top:724px;">3</div>
<div class="cb" style="left:68px;top:774px"></div>
<div class="tg" style="left:129px;top:775px"><i></i></div>
<div class="t " style="left:203px;top:770px;font-size:13.2px;color:#2d6cc0">220915_GP_LETS_WOMEN2045_DOWN_bud...</div>
<div class="a" style="left:511px;top:763px;width:38px;height:46px;overflow:hidden"><div class="t" style="left:-12px;top:7px;font-size:13px;color:#444;letter-spacing:-0.6px">클릭...</div></div>
<div class="t num" style="right:1221px;top:770px;"><span class="dash"></span></div>
<div class="t sub" style="right:1221px;top:791px;">모바일 앱 설치</div>
<div class="t num" style="right:1075px;top:770px;">347</div>
<div class="t num" style="right:929px;top:770px;">435</div>
<div class="t num" style="right:783px;top:770px;"><span class="dash"></span></div>
<div class="t sub" style="right:783px;top:791px;">모바일 앱 설치당</div>
<div class="t num" style="right:637px;top:770px;">₩12,118</div>
<div class="t num" style="right:524px;top:770px;">진행 중</div>
<div class="t num" style="left:1405px;top:770px;">2022. 9. 17. - 진행 중</div>
<div class="t num" style="right:78px;top:770px;">4</div>
<div class="cb" style="left:68px;top:820px"></div>
<div class="tg" style="left:129px;top:821px"><i></i></div>
<div class="t " style="left:203px;top:816px;font-size:13.2px;color:#2d6cc0">220915_GP_LETS_WOMEN2045</div>
<div class="a" style="left:511px;top:809px;width:38px;height:46px;overflow:hidden"><div class="t" style="left:-12px;top:7px;font-size:13px;color:#444;letter-spacing:-0.6px">클릭...</div></div>
<div class="t num" style="right:1221px;top:816px;"><span class="dash"></span></div>
<div class="t sub" style="right:1221px;top:837px;">모바일 앱 설치</div>
<div class="t num" style="right:1075px;top:816px;">1,160</div>
<div class="t num" style="right:929px;top:816px;">1,288</div>
<div class="t num" style="right:783px;top:816px;"><span class="dash"></span></div>
<div class="t sub" style="right:783px;top:837px;">모바일 앱 설치당</div>
<div class="t num" style="right:637px;top:816px;">₩10,006</div>
<div class="t num" style="right:524px;top:816px;">진행 중</div>
<div class="t num" style="left:1405px;top:816px;">2022. 9. 15. - 진행 중</div>
<div class="t num" style="right:78px;top:816px;">12</div>
<div class="a" style="left:56px;top:843px;width:1803px;height:63px;background:#fff;box-shadow:0 -1px 3px rgba(0,0,0,.14)"></div>
<div class="a" style="left:56px;top:905px;width:1803px;height:1px;background:#dddddd"></div>
<div class="a" style="left:190px;top:843px;width:1px;height:63px;background:#dddddd"></div>
<div class="a" style="left:549px;top:843px;width:1px;height:63px;background:#dddddd"></div>
<div class="a" style="left:695px;top:843px;width:1px;height:63px;background:#dddddd"></div>
<div class="a" style="left:841px;top:843px;width:1px;height:63px;background:#dddddd"></div>
<div class="a" style="left:987px;top:843px;width:1px;height:63px;background:#dddddd"></div>
<div class="a" style="left:1133px;top:843px;width:1px;height:63px;background:#dddddd"></div>
<div class="a" style="left:1279px;top:843px;width:1px;height:63px;background:#dddddd"></div>
<div class="a" style="left:1392px;top:843px;width:1px;height:63px;background:#dddddd"></div>
<div class="a" style="left:1692px;top:843px;width:1px;height:63px;background:#dddddd"></div>
<div class="a" style="left:1838px;top:843px;width:1px;height:63px;background:#dddddd"></div>
<div class="a" style="left:511px;top:843px;width:6px;height:63px;background:linear-gradient(90deg,rgba(0,0,0,.11),rgba(0,0,0,0))"></div>
<div class="t hd" style="left:203px;top:851px;">광고 세트 13개 결과</div>
<svg style="left:332px;top:854px" width="12" height="12" viewBox="0 0 12 12"><circle cx="6" cy="6" r="6" fill="#444"/><rect x="5.1" y="5" width="1.8" height="4.5" fill="#fff"/><circle cx="6" cy="3.2" r="1.1" fill="#fff"/></svg>
<div class="a" style="left:511px;top:852px;width:38px;height:20px;overflow:hidden"><div class="t hd" style="left:-8px;top:0">설정</div></div>
<div class="t num" style="right:1215px;top:852px;font-weight:bold;color:#1c1e21"><span class="dashb"></span></div>
<div class="t sub" style="right:1215px;top:873px;">모바일 앱 설치</div>
<div class="t num" style="right:1069px;top:852px;font-weight:bold;color:#1c1e21">8,770</div>
<div class="t sub" style="right:1069px;top:873px;">명</div>
<div class="t num" style="right:923px;top:852px;font-weight:bold;color:#1c1e21">18,195</div>
<div class="t sub" style="right:923px;top:873px;">전체</div>
<div class="t num" style="right:777px;top:852px;font-weight:bold;color:#1c1e21"><span class="dashb"></span></div>
<div class="t sub" style="right:777px;top:873px;">모바일 앱 설치당</div>
<div class="t num" style="right:631px;top:852px;font-weight:bold;color:#1c1e21">₩454,557</div>
<div class="t sub" style="right:631px;top:873px;">총 지출</div>
<div class="t num" style="right:72px;top:852px;font-weight:bold;color:#1c1e21">359</div>
<div class="t sub" style="right:72px;top:873px;">전체</div>
<div class="a" style="left:1850px;top:262px;width:6px;height:560px;border-radius:3px;background:#c4c4c4"></div>
</body></html>
